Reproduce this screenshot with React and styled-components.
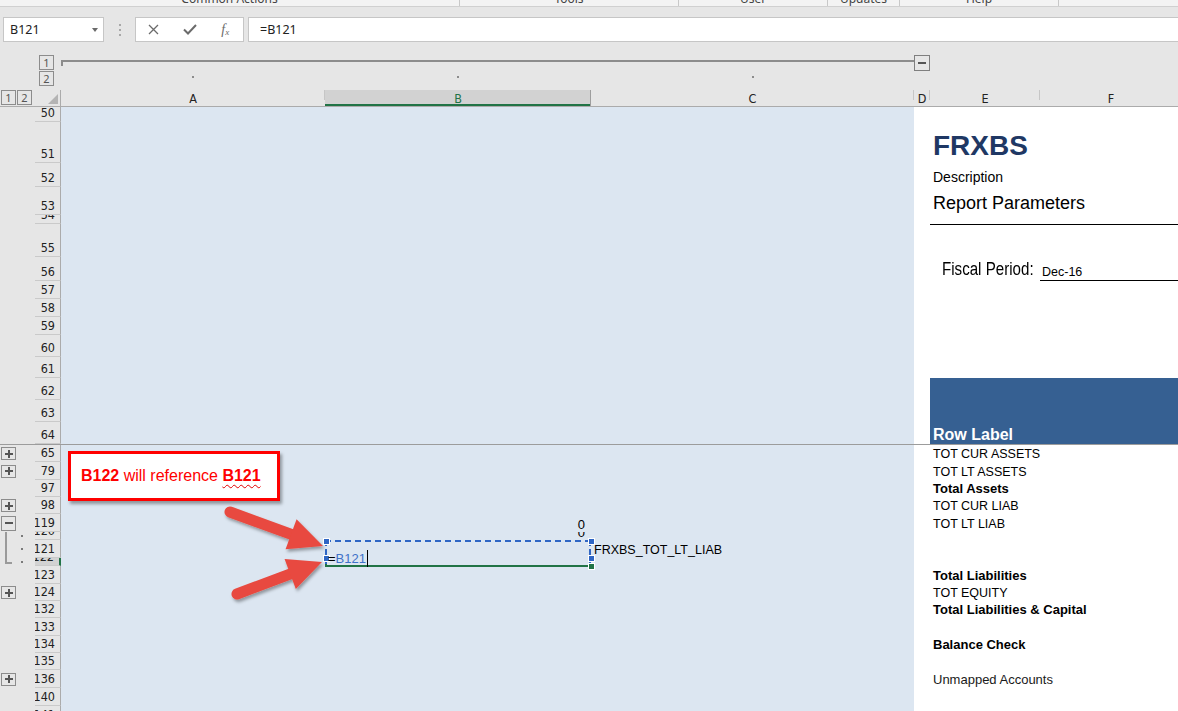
import React from 'react';
import styled, { createGlobalStyle } from 'styled-components';

const UI_FONT = `"Noto Sans", "Liberation Sans", sans-serif`;
const HEAD_FONT = `"Liberation Sans Narrow", "DejaVu Sans Condensed", "Noto Sans", sans-serif`;
const CELL_FONT = `"Liberation Sans", Arial, sans-serif`;

const GlobalStyle = createGlobalStyle`
  html, body { margin: 0; padding: 0; background: #e6e6e6; overflow: hidden; }
  body { font-family: ${UI_FONT}; }
  #root { width: 1178px; height: 711px; overflow: hidden; }
`;

const Page = styled.div`
  position: relative;
  width: 1178px;
  height: 711px;
  overflow: hidden;
  background: #e6e6e6;
  display: flex;
  flex-direction: column;
`;

/* ---------- ribbon group labels (cut off at top) ---------- */
const RibbonStrip = styled.div`
  flex: none;
  height: 6px;
  display: flex;
  background: #f3f3f3;
  border-bottom: 1px solid #d0d0d0;
  overflow: hidden;
`;
const RibbonGroup = styled.div`
  flex: ${p => (p.$w ? `0 0 ${p.$w}px` : '1 1 auto')};
  box-sizing: border-box;
  border-right: ${p => (p.$w ? '1px solid #c8c8c8' : 'none')};
  text-align: center;
  overflow: hidden;
`;
const RibbonLabel = styled.span`
  display: block;
  margin-top: -7px;
  font-size: 12px;
  line-height: 12px;
  color: #444;
  white-space: nowrap;
`;

/* ---------- formula bar ---------- */
const FormulaRow = styled.div`
  flex: none;
  display: flex;
  height: 25px;
  margin-top: 10px;
  padding-left: 3px;
`;
const NameBox = styled.div`
  flex: 0 0 101px;
  box-sizing: border-box;
  background: #fff;
  border: 1px solid #c6c6c6;
  display: flex;
  align-items: center;
  justify-content: space-between;
  padding: 0 5px 0 6px;
  font-size: 12.5px;
  color: #222;
`;
const DropCaret = styled.span`
  width: 0;
  height: 0;
  border-left: 3.5px solid transparent;
  border-right: 3.5px solid transparent;
  border-top: 4px solid #6a6a6a;
`;
const Grip = styled.div`
  flex: 0 0 31px;
  display: flex;
  flex-direction: column;
  align-items: center;
  justify-content: center;
  gap: 3px;
`;
const GripDot = styled.span`
  width: 2px;
  height: 2px;
  background: #a8a8a8;
`;
const FxBox = styled.div`
  flex: 0 0 109px;
  box-sizing: border-box;
  background: #fff;
  border: 1px solid #c6c6c6;
  display: flex;
  align-items: center;
`;
const FxButton = styled.span`
  flex: 1;
  display: flex;
  align-items: center;
  justify-content: center;
  color: #6b6b6b;
`;
const FxText = styled.span`
  font-family: "Liberation Serif", serif;
  font-style: italic;
  font-size: 14px;
  color: #6b6b6b;
  sub { font-size: 9px; vertical-align: -1px; }
`;
const FormulaInput = styled.div`
  flex: 1;
  margin-left: 4px;
  margin-right: -2px;
  box-sizing: border-box;
  background: #fff;
  border: 1px solid #c6c6c6;
  display: flex;
  align-items: center;
  padding-left: 11px;
  font-size: 12.5px;
  color: #222;
`;

/* ---------- column outline bar ---------- */
const OutlineBar = styled.div`
  flex: none;
  display: flex;
  height: 35px;
  margin-top: 13px;
`;
const OutlineLeft = styled.div`
  flex: 0 0 61px;
  display: flex;
  flex-direction: column;
  gap: 1px;
  padding-left: 39px;
  box-sizing: border-box;
`;
const LevelButton = styled.span`
  width: 15px;
  height: 15px;
  box-sizing: border-box;
  border: 1px solid #8c8c8c;
  display: flex;
  align-items: center;
  justify-content: center;
  font-size: 11px;
  line-height: 1;
  color: #555;
`;
const OutlineTrack = styled.div`
  flex: 0 0 853px;
  display: flex;
  flex-direction: column;
`;
const TrackLine = styled.div`
  position: relative;
  margin-top: 5px;
  height: 2px;
  background: #8c8c8c;
  &::before {
    content: '';
    position: absolute;
    left: 0;
    top: 0;
    width: 2px;
    height: 6px;
    background: #8c8c8c;
  }
`;
const TrackDots = styled.div`
  display: grid;
  grid-template-columns: 264px 266px 323px;
  margin-top: 14px;
  justify-items: center;
`;
const TrackDot = styled.span`
  width: 2px;
  height: 2px;
  background: #8c8c8c;
`;
const CollapseBox = styled.span`
  flex: 0 0 16px;
  height: 16px;
  box-sizing: border-box;
  border: 1px solid #7f7f7f;
  display: flex;
  align-items: center;
  justify-content: center;
  &::after {
    content: '';
    width: 8px;
    height: 2px;
    background: #555;
  }
`;

/* ---------- column header ---------- */
const ColHeaderRow = styled.div`
  flex: none;
  display: flex;
  height: 17px;
  box-sizing: border-box;
  border-bottom: 1px solid #ababab;
`;
const Corner = styled.div`
  flex: 0 0 61px;
  box-sizing: border-box;
  border-right: 1px solid #ababab;
  display: flex;
  align-items: flex-start;
  gap: 1px;
  padding-left: 1px;
`;
const SelectAll = styled.span`
  margin: auto 2px 2px auto;
  width: 0;
  height: 0;
  border-left: 10px solid transparent;
  border-bottom: 10px solid #b4b4b4;
`;
const ColHead = styled.div`
  flex: 0 0 ${p => p.$w}px;
  min-width: 0;
  box-sizing: border-box;
  position: relative;
  display: flex;
  align-items: center;
  justify-content: center;
  font-family: ${HEAD_FONT};
  font-size: 12.5px;
  color: ${p => (p.$selected ? '#217346' : '#222')};
  background: ${p => (p.$selected ? '#d2d2d2' : 'transparent')};
  box-shadow: ${p => (p.$selected ? 'inset 0 -2px 0 #217346' : 'none')};
  &::after {
    content: '';
    position: absolute;
    right: 0;
    top: 0;
    width: 1px;
    height: ${p => (p.$selected ? '100%' : '10px')};
    background: ${p => (p.$selected ? '#9e9e9e' : '#c6c6c6')};
  }
`;

/* ---------- sheet rows ---------- */
const Sheet = styled.div`
  flex: none;
  display: flex;
  flex-direction: column;
`;
const RowLine = styled.div`
  flex: none;
  display: flex;
  height: ${p => p.$h}px;
  box-sizing: border-box;
  background: #fff;
  border-bottom: ${p => (p.$frozen ? '1px solid #9c9c9c' : 'none')};
`;
const OutlineCell = styled.div`
  flex: 0 0 35px;
  position: relative;
  display: flex;
  align-items: center;
  background: #e6e6e6;
  &::before {
    content: '';
    display: ${p => (p.$bracket ? 'block' : 'none')};
    position: absolute;
    left: 5px;
    top: 0;
    bottom: ${p => (p.$bracket === 'end' ? '2px' : '0')};
    width: 2px;
    background: #9a9a9a;
  }
  &::after {
    content: '';
    display: ${p => (p.$bracket === 'end' ? 'block' : 'none')};
    position: absolute;
    left: 5px;
    bottom: 2px;
    width: 7px;
    height: 2px;
    background: #9a9a9a;
  }
`;
const ToggleBox = styled.span`
  margin-left: 1px;
  width: 15px;
  height: ${p => (p.$minus ? 15 : 13)}px;
  box-sizing: border-box;
  border: 1px solid #8c8c8c;
  position: relative;
  display: flex;
  align-items: center;
  justify-content: center;
  &::before {
    content: '';
    width: 8px;
    height: 2px;
    background: #555;
  }
  &::after {
    content: '';
    display: ${p => (p.$minus ? 'none' : 'block')};
    position: absolute;
    width: 2px;
    height: 8px;
    background: #555;
  }
`;
const OutlineDot = styled.span`
  margin-left: 21px;
  width: 2px;
  height: 2px;
  background: #7a7a7a;
`;
const RowNum = styled.div`
  flex: 0 0 26px;
  box-sizing: border-box;
  display: flex;
  align-items: flex-end;
  justify-content: flex-end;
  overflow: hidden;
  padding: 0 5px 1px 0;
  font-family: ${HEAD_FONT};
  font-size: 12.5px;
  line-height: 14px;
  color: #222;
  background: ${p => (p.$selected ? '#d2d2d2' : '#e6e6e6')};
  border-bottom: 1px solid #cacaca;
  border-right: ${p => (p.$selected ? '2px solid #217346' : '1px solid #ababab')};
`;
const Cell = styled.div`
  flex: 0 0 ${p => p.$w}px;
  min-width: 0;
  box-sizing: border-box;
  display: flex;
  align-items: flex-end;
  justify-content: ${p => p.$align || 'flex-start'};
  padding: 0 3px;
  white-space: nowrap;
  overflow: ${p => (p.$open ? 'visible' : 'hidden')};
  background: ${p => (p.$band ? '#366092' : p.$tint ? '#dce6f1' : 'transparent')};
  border-top: ${p => (p.$rule ? '1px solid #000' : 'none')};
  border-bottom: ${p => (p.$underline ? '1px solid #000' : 'none')};
  font-family: ${CELL_FONT};
  font-size: 13px;
  line-height: 15px;
  color: #000;
`;

const Title = styled.span`
  font-size: 28px;
  font-weight: bold;
  line-height: 32px;
  padding-bottom: 1px;
  color: #1f3864;
`;
const Desc = styled.span`
  font-size: 14px;
  line-height: 16px;
  padding-bottom: 2px;
`;
const SubTitle = styled.span`
  font-size: 18px;
  line-height: 21px;
  padding-bottom: 1px;
`;
const Fiscal = styled.span`
  display: inline-block;
  font-size: 18px;
  line-height: 21px;
  padding: 0 0 1px 9px;
  transform: scaleX(0.84);
  transform-origin: 9px 0;
`;
const Period = styled.span`
  font-size: 12.5px;
  line-height: 15px;
  margin-left: -1px;
`;
const BandLabel = styled.span`
  font-size: 16px;
  font-weight: bold;
  line-height: 18px;
  color: #fff;
`;
const Item = styled.span`
  font-size: ${p => (p.$caps ? 12.5 : 13)}px;
  font-weight: ${p => (p.$bold ? 'bold' : 'normal')};
  line-height: 15px;
  padding-bottom: ${p => (p.$caps ? 0 : 1)}px;
  color: ${p => (p.$soft ? '#1a1a1a' : '#000')};
`;
const Num = styled.span`
  font-size: 13px;
  line-height: 15px;
  margin-right: 3px;
`;

/* ---------- overlays ---------- */
const Callout = styled.div`
  position: absolute;
  left: 68px;
  top: 451px;
  width: 212px;
  height: 50px;
  box-sizing: border-box;
  background: #fff;
  border: 3px solid #ff0000;
  box-shadow: 2px 3px 3px rgba(0, 0, 0, 0.35);
  display: flex;
  align-items: center;
  padding-left: 10px;
  font-family: ${CELL_FONT};
  font-size: 16px;
  color: #f00;
  white-space: nowrap;
`;
const Strong = styled.b`
  font-weight: bold;
  text-decoration: ${p => (p.$spell ? 'underline wavy #e00000' : 'none')};
  text-decoration-thickness: 1px;
  text-underline-offset: 3px;
`;
const Arrows = styled.svg`
  position: absolute;
  left: 215px;
  top: 495px;
  width: 120px;
  height: 115px;
  overflow: visible;
`;
const Selection = styled.div`
  position: absolute;
  left: 323px;
  top: 538px;
  width: 271px;
  height: 31px;
`;
const RefMarquee = styled.div`
  position: absolute;
  left: 2px;
  top: 2px;
  width: 266px;
  height: 24px;
  box-sizing: border-box;
  border: 2px dashed #2f66c4;
  border-bottom: none;
`;
const ActiveBorder = styled.div`
  position: absolute;
  left: 2px;
  top: 19px;
  width: 266px;
  height: 10px;
  box-sizing: border-box;
  border: 2px solid #217346;
  border-top: none;
`;
const Handle = styled.span`
  position: absolute;
  width: 5px;
  height: 5px;
  background: ${p => (p.$green ? '#217346' : '#2f66c4')};
  border: 1px solid #fff;
  left: ${p => p.$x}px;
  top: ${p => p.$y}px;
`;
const EditText = styled.div`
  position: absolute;
  left: 5px;
  top: 12px;
  display: flex;
  align-items: center;
  font-family: ${CELL_FONT};
  font-size: 13px;
  line-height: 15px;
  color: #000;
`;
const RefText = styled.span`
  color: #3f72c9;
`;
const TextCaret = styled.span`
  width: 1px;
  height: 17px;
  margin-left: 1px;
  background: #000;
`;

function Arrow({ tail, tip }) {
  const dx = tip[0] - tail[0];
  const dy = tip[1] - tail[1];
  const len = Math.hypot(dx, dy);
  const ux = dx / len;
  const uy = dy / len;
  const nx = -uy;
  const ny = ux;
  const headL = 34;
  const halfW = 16;
  const bx = tip[0] - ux * headL;
  const by = tip[1] - uy * headL;
  const pts = [
    [bx + nx * halfW, by + ny * halfW],
    tip,
    [bx - nx * halfW, by - ny * halfW],
  ]
    .map(p => p.join(','))
    .join(' ');
  return (
    <g>
      <line
        x1={tail[0]}
        y1={tail[1]}
        x2={bx + ux * 4}
        y2={by + uy * 4}
        stroke="#e84a3f"
        strokeWidth="11"
        strokeLinecap="round"
      />
      <polygon points={pts} fill="#e84a3f" strokeLinejoin="round" />
    </g>
  );
}

const rows = [
  { n: '50', h: 15 },
  { n: '51', h: 41, e: <Title>FRXBS</Title> },
  { n: '52', h: 24, e: <Desc>Description</Desc> },
  { n: '53', h: 28, e: <SubTitle>Report Parameters</SubTitle> },
  { n: '54', h: 9 },
  { n: '55', h: 33, rule: true },
  { n: '56', h: 24, e: <Fiscal>Fiscal Period:</Fiscal>, f: <Period>Dec-16</Period>, underline: true },
  { n: '57', h: 18 },
  { n: '58', h: 18 },
  { n: '59', h: 18 },
  { n: '60', h: 22 },
  { n: '61', h: 21 },
  { n: '62', h: 22, band: true },
  { n: '63', h: 22, band: true },
  { n: '64', h: 23, band: true, frozen: true, e: <BandLabel>Row Label</BandLabel> },
  { n: '65', h: 17, plus: true, e: <Item $caps>TOT CUR ASSETS</Item> },
  { n: '79', h: 18, plus: true, e: <Item $caps>TOT LT ASSETS</Item> },
  { n: '97', h: 17, e: <Item $bold>Total Assets</Item> },
  { n: '98', h: 17, plus: true, e: <Item $caps>TOT CUR LIAB</Item> },
  { n: '119', h: 18, minus: true, b: <Num>0</Num>, e: <Item $caps>TOT LT LIAB</Item> },
  { n: '120', h: 8, bracket: 'line', dot: true, b: <Num>0</Num> },
  { n: '121', h: 18, bracket: 'line', dot: true, c: <Item $caps>FRXBS_TOT_LT_LIAB</Item> },
  { n: '122', h: 8, bracket: 'end', dot: true, selected: true },
  { n: '123', h: 18, e: <Item $bold>Total Liabilities</Item> },
  { n: '124', h: 17, plus: true, e: <Item $caps>TOT EQUITY</Item> },
  { n: '132', h: 17, e: <Item $bold>Total Liabilities &amp; Capital</Item> },
  { n: '133', h: 18 },
  { n: '134', h: 17, e: <Item $bold>Balance Check</Item> },
  { n: '135', h: 17 },
  { n: '136', h: 18, plus: true, e: <Item $soft>Unmapped Accounts</Item> },
  { n: '140', h: 18 },
  { n: '141', h: 18 },
];

const COLS = [
  { id: 'A', w: 264 },
  { id: 'B', w: 266, selected: true },
  { id: 'C', w: 323 },
  { id: 'D', w: 16 },
  { id: 'E', w: 110 },
  { id: 'F', w: 142 },
];

function SheetRow({ r }) {
  return (
    <RowLine $h={r.h} $frozen={r.frozen}>
      <OutlineCell $bracket={r.bracket}>
        {r.plus && <ToggleBox />}
        {r.minus && <ToggleBox $minus />}
        {r.dot && <OutlineDot />}
      </OutlineCell>
      <RowNum $selected={r.selected}>{r.n}</RowNum>
      <Cell $w={264} $tint />
      <Cell $w={266} $tint $align="flex-end">{r.b}</Cell>
      <Cell $w={323} $tint>{r.c}</Cell>
      <Cell $w={16} />
      <Cell $w={110} $open $band={r.band} $rule={r.rule}>{r.e}</Cell>
      <Cell $w={142} $band={r.band} $rule={r.rule} $underline={r.underline}>{r.f}</Cell>
    </RowLine>
  );
}

export default function App() {
  return (
    <Page>
      <GlobalStyle />
      <RibbonStrip>
        <RibbonGroup $w={460}><RibbonLabel>Common Actions</RibbonLabel></RibbonGroup>
        <RibbonGroup $w={219}><RibbonLabel>Tools</RibbonLabel></RibbonGroup>
        <RibbonGroup $w={149}><RibbonLabel>User</RibbonLabel></RibbonGroup>
        <RibbonGroup $w={72}><RibbonLabel>Updates</RibbonLabel></RibbonGroup>
        <RibbonGroup $w={159}><RibbonLabel>Help</RibbonLabel></RibbonGroup>
        <RibbonGroup />
      </RibbonStrip>

      <FormulaRow>
        <NameBox>
          <span>B121</span>
          <DropCaret />
        </NameBox>
        <Grip>
          <GripDot />
          <GripDot />
          <GripDot />
        </Grip>
        <FxBox>
          <FxButton>
            <svg width="11" height="11" viewBox="0 0 11 11">
              <path d="M1 1 L10 10 M10 1 L1 10" stroke="#6b6b6b" strokeWidth="1.3" fill="none" />
            </svg>
          </FxButton>
          <FxButton>
            <svg width="14" height="11" viewBox="0 0 14 11">
              <path d="M1 5.5 L5 9.5 L13 1" stroke="#6b6b6b" strokeWidth="2" fill="none" />
            </svg>
          </FxButton>
          <FxButton>
            <FxText>f<sub>x</sub></FxText>
          </FxButton>
        </FxBox>
        <FormulaInput>=B121</FormulaInput>
      </FormulaRow>

      <OutlineBar>
        <OutlineLeft>
          <LevelButton>1</LevelButton>
          <LevelButton>2</LevelButton>
        </OutlineLeft>
        <OutlineTrack>
          <TrackLine />
          <TrackDots>
            <TrackDot />
            <TrackDot />
            <TrackDot />
          </TrackDots>
        </OutlineTrack>
        <CollapseBox />
      </OutlineBar>

      <ColHeaderRow>
        <Corner>
          <LevelButton>1</LevelButton>
          <LevelButton>2</LevelButton>
          <SelectAll />
        </Corner>
        {COLS.map(c => (
          <ColHead key={c.id} $w={c.w} $selected={c.selected}>{c.id}</ColHead>
        ))}
      </ColHeaderRow>

      <Sheet>
        {rows.map(r => (
          <SheetRow key={r.n} r={r} />
        ))}
      </Sheet>

      <Callout>
        <Strong>B122</Strong>&nbsp;will reference&nbsp;<Strong $spell>B121</Strong>
      </Callout>

      <Arrows viewBox="215 495 120 115">
        <defs>
          <filter id="arrowShadow" x="-20%" y="-20%" width="140%" height="140%">
            <feDropShadow dx="1.5" dy="2.5" stdDeviation="1.5" floodColor="#000" floodOpacity="0.35" />
          </filter>
        </defs>
        <g filter="url(#arrowShadow)">
          <Arrow tail={[230, 512]} tip={[323, 546]} />
          <Arrow tail={[237, 594]} tip={[322, 562]} />
        </g>
      </Arrows>

      <Selection>
        <ActiveBorder />
        <RefMarquee />
        <Handle $x={0} $y={0} />
        <Handle $x={265} $y={0} />
        <Handle $x={0} $y={17} />
        <Handle $x={265} $y={17} />
        <Handle $x={265} $y={25} $green />
        <EditText>
          =<RefText>B121</RefText>
          <TextCaret />
        </EditText>
      </Selection>
    </Page>
  );
}
